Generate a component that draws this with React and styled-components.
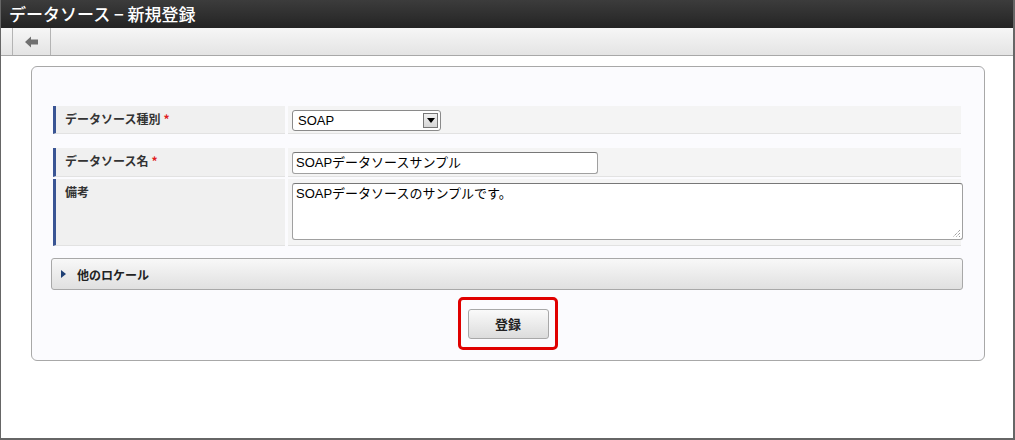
import React from 'react';
import styled, { createGlobalStyle } from 'styled-components';

const GlobalStyle = createGlobalStyle`
  html, body {
    margin: 0;
    padding: 0;
    background: #fff;
  }
  body {
    font-family: Arial, "Liberation Sans", "Noto Sans CJK JP", sans-serif;
  }
`;

const Frame = styled.div`
  width: 1015px;
  height: 440px;
  box-sizing: border-box;
  border-left: 1px solid #666;
  border-right: 2px solid #666;
  border-bottom: 2px solid #666;
  background: #fff;
  overflow: hidden;
`;

const TitleBar = styled.div`
  height: 28px;
  background: linear-gradient(#3c3c3c, #242424);
  color: #fff;
  font-family: "Noto Sans CJK JP", sans-serif;
  font-size: 17px;
  font-weight: 500;
  line-height: 28px;
  padding-left: 8px;
`;

const Toolbar = styled.div`
  height: 27px;
  display: flex;
  background: linear-gradient(#f6f6f6, #e4e4e4);
  border-bottom: 1px solid #a8a8a8;
  padding-left: 11px;
`;

const ToolButton = styled.div`
  width: 37px;
  display: flex;
  align-items: center;
  justify-content: center;
  border-left: 1px solid #b4b4b4;
  border-right: 1px solid #b4b4b4;
`;

const Body = styled.div`
  padding: 10px 30px 0 30px;
`;

const Panel = styled.div`
  width: 954px;
  height: 295px;
  box-sizing: border-box;
  background: #fbfbfe;
  border: 1px solid #a8a8a8;
  border-radius: 6px;
  padding: 39px 21px 0 20px;
`;

const Table = styled.div`
  display: grid;
  grid-template-columns: 233px 673px;
  column-gap: 3px;
  row-gap: 2px;
  margin-bottom: ${({ gap }) => gap}px;
`;

const Label = styled.div`
  background: #f0f0f0;
  border-left: 3px solid #3a5594;
  margin-left: 1px;
  height: ${({ h }) => h}px;
  box-sizing: border-box;
  padding: 4px 0 0 9px;
  font-family: "Noto Sans CJK JP", sans-serif;
  font-size: 12px;
  font-weight: 700;
  color: #333;
  border-bottom: 1px solid #e2e2e2;
`;

const Required = styled.span`
  color: #e02020;
  margin-left: 3px;
`;

const Value = styled.div`
  background: #f4f4f4;
  height: ${({ h }) => h}px;
  box-sizing: border-box;
  padding: 4px 0 0 4px;
  border-bottom: 1px solid #e2e2e2;
`;

const Select = styled.div`
  width: 149px;
  height: 21px;
  box-sizing: border-box;
  border: 1px solid #8a8a8a;
  border-radius: 3px;
  background: #fff;
  display: flex;
  align-items: center;
  justify-content: space-between;
  padding: 0 2px 0 5px;
  font-size: 13px;
  color: #000;
`;

const SelectArrow = styled.div`
  width: 15px;
  height: 15px;
  box-sizing: border-box;
  border: 1px solid #777;
  background: linear-gradient(#f0f0f0, #d6d6d6);
  display: flex;
  align-items: center;
  justify-content: center;
`;

const TextInput = styled.div`
  width: 306px;
  height: 22px;
  box-sizing: border-box;
  border: 1px solid #a0a0a0;
  border-top-color: #777;
  border-radius: 3px;
  background: #fff;
  padding: 2px 3px;
  font-size: 13px;
  line-height: 16px;
  color: #000;
`;

const TextArea = styled.div`
  position: relative;
  width: 671px;
  height: 57px;
  box-sizing: border-box;
  border: 1px solid #a0a0a0;
  border-top-color: #777;
  border-radius: 3px;
  background: #fff;
  padding: 2px 3px;
  font-size: 13px;
  line-height: 16px;
  color: #000;
`;

const Grip = styled.svg`
  position: absolute;
  right: 1px;
  bottom: 1px;
`;

const Accordion = styled.div`
  width: 912px;
  height: 32px;
  box-sizing: border-box;
  margin-left: -1px;
  border: 1px solid #a8a8a8;
  border-radius: 3px;
  background: linear-gradient(#f8f8f8, #e0e0e0);
  display: flex;
  align-items: center;
  padding-left: 9px;
  gap: 11px;
  font-family: "Noto Sans CJK JP", sans-serif;
  font-size: 12px;
  font-weight: 700;
  color: #222;
`;

const ButtonRow = styled.div`
  display: flex;
  justify-content: center;
  margin-top: 7px;
`;

const Highlight = styled.div`
  width: 100px;
  height: 53px;
  box-sizing: border-box;
  border: 3px solid #e00000;
  border-radius: 5px;
  display: flex;
  align-items: center;
  justify-content: center;
  margin-left: 1px;
`;

const SubmitButton = styled.div`
  width: 81px;
  height: 30px;
  box-sizing: border-box;
  border: 1px solid #a8a8a8;
  border-radius: 3px;
  background: linear-gradient(#fafafa, #dcdcdc);
  display: flex;
  align-items: center;
  justify-content: center;
  font-family: "Noto Sans CJK JP", sans-serif;
  font-size: 13px;
  font-weight: 700;
  color: #222;
`;

const App = () => (
  <>
    <GlobalStyle />
    <Frame>
      <TitleBar>データソース − 新規登録</TitleBar>
      <Toolbar>
        <ToolButton>
          <svg width="14" height="12" viewBox="0 0 14 12">
            <path d="M0 6 L6 0.5 L6 3.5 L13 3.5 L13 8.5 L6 8.5 L6 11.5 Z" fill="#707070" />
          </svg>
        </ToolButton>
      </Toolbar>
      <Body>
        <Panel>
          <Table gap={14}>
            <Label h={28}>データソース種別<Required>*</Required></Label>
            <Value h={28}>
              <Select>
                SOAP
                <SelectArrow>
                  <svg width="8" height="5" viewBox="0 0 8 5">
                    <path d="M0 0 L8 0 L4 5 Z" fill="#000" />
                  </svg>
                </SelectArrow>
              </Select>
            </Value>
          </Table>
          <Table gap={12}>
            <Label h={29}>データソース名<Required>*</Required></Label>
            <Value h={29}>
              <TextInput>SOAPデータソースサンプル</TextInput>
            </Value>
            <Label h={67}>備考</Label>
            <Value h={67}>
              <TextArea>
                SOAPデータソースのサンプルです。
                <Grip width="10" height="10" viewBox="0 0 10 10">
                  <path d="M9 2 L2 9 M9 5 L5 9 M9 8 L8 9" stroke="#777" strokeWidth="1" strokeDasharray="1 1" />
                </Grip>
              </TextArea>
            </Value>
          </Table>
          <Accordion>
            <svg width="5" height="8" viewBox="0 0 5 8">
              <path d="M0 0 L5 4 L0 8 Z" fill="#1e3f74" />
            </svg>
            他のロケール
          </Accordion>
          <ButtonRow>
            <Highlight>
              <SubmitButton>登録</SubmitButton>
            </Highlight>
          </ButtonRow>
        </Panel>
      </Body>
    </Frame>
  </>
);

export default App;
